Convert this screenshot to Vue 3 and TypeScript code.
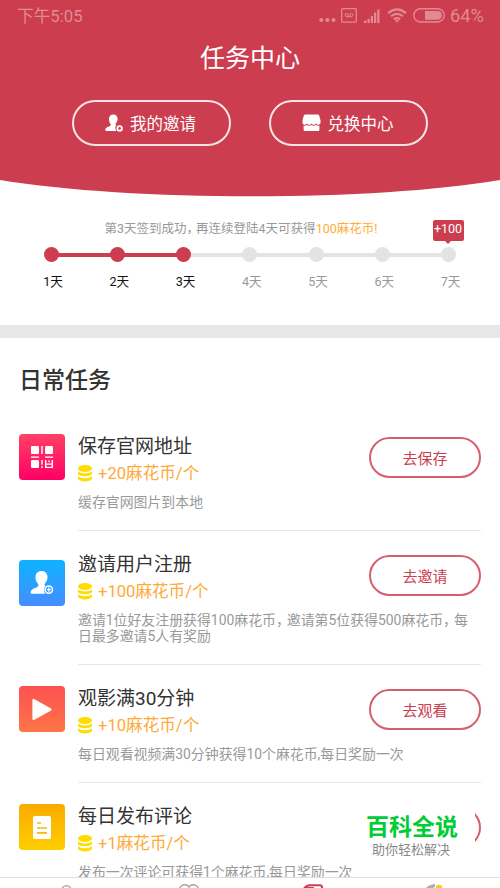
<script setup lang="ts">
type IconName = 'qr' | 'invite' | 'play' | 'note'

interface Task {
  icon: IconName
  title: string
  reward: number
  desc: string[]
  action: string
}

const signedDays = 3
const days: number[] = [1, 2, 3, 4, 5, 6, 7]

// Descriptions are split into clauses, joined by a tightened full-width comma.
const tasks: Task[] = [
  { icon: 'qr', title: '保存官网地址', reward: 20, desc: ['缓存官网图片到本地'], action: '去保存' },
  {
    icon: 'invite',
    title: '邀请用户注册',
    reward: 100,
    desc: ['邀请1位好友注册获得100麻花币', '邀请第5位获得500麻花币', '每日最多邀请5人有奖励'],
    action: '去邀请',
  },
  { icon: 'play', title: '观影满30分钟', reward: 10, desc: ['每日观看视频满30分钟获得10个麻花币,每日奖励一次'], action: '去观看' },
  { icon: 'note', title: '每日发布评论', reward: 1, desc: ['发布一次评论可获得1个麻花币,每日奖励一次'], action: '' },
]
</script>

<template>
  <div class="page">
    <header class="hero">
      <div class="status">
        <span class="time">下午5:05</span>
        <div class="indicators">
          <svg class="dots" width="17" height="6" viewBox="0 0 17 6" fill="currentColor">
            <circle cx="2.3" cy="3" r="2.1" /><circle cx="8.4" cy="3" r="2.1" /><circle cx="14.5" cy="3" r="2.1" />
          </svg>
          <svg class="sim" width="16" height="15" viewBox="0 0 16 15" fill="none" stroke="currentColor">
            <rect x=".7" y=".7" width="14.6" height="13.4" rx="1" stroke-width="1.3" />
            <circle cx="5.6" cy="7" r="1.6" /><circle cx="10.4" cy="7" r="1.6" /><path d="M5.6 8.7h4.8" />
          </svg>
          <svg class="signal" width="16" height="14" viewBox="0 0 16 14" fill="currentColor">
            <path d="M0 14v-2l2.5-1.3V14zM3.6 14v-4.2h2.2V14zM6.8 14V7H9v7zM10 14V3.6h2.2V14zM13.2 14V.5h2.3V14z" />
          </svg>
          <svg class="wifi" width="20" height="15" viewBox="0 0 20 15" fill="none" stroke="currentColor" stroke-width="2.1">
            <path d="M1 5.2Q10-2.5 19 5.2M4 8.3q6-5 12 0M6.9 11.3q3.1-2.4 6.2 0" />
            <path d="M7.7 12.2h4.6L10 14.7z" fill="currentColor" stroke="none" />
          </svg>
          <svg class="battery" width="32" height="15" viewBox="0 0 32 15">
            <rect x=".8" y=".8" width="30.4" height="13.2" rx="6.6" fill="none" stroke="currentColor" stroke-width="1.4" />
            <path d="M12 3h12.5a4.4 4.4 0 0 1 0 8.8H12z" fill="currentColor" />
          </svg>
          <span class="percent">64%</span>
        </div>
      </div>
      <h1>任务中心</h1>
      <div class="hero-actions">
        <button class="pill">
          <svg width="18" height="18" viewBox="0 0 18 18" fill="#fff">
            <path d="M8.3.5c2.7 0 4.3 1.9 4.3 4.5 0 2-.9 3.4-1.8 4.5-.5.7-.3 1.4.6 1.800-1 .9-1.300 2-1 3.300.1 1 .4 1.800 1 2.400H1.600C.7 17 .3 16.600.3 15.800c0-1.700 1.200-2.300 3-3 1.600-.6 3-1.200 2.400-2.500C4.800 9.200 4 7.500 4 5 4 2.400 5.600.5 8.300.5z" />
            <circle cx="14.600" cy="14.400" r="2.300" fill="none" stroke="#fff" stroke-width="1.800" />
          </svg>
          <span>我的邀请</span>
        </button>
        <button class="pill">
          <svg width="19" height="18" viewBox="0 0 19 18" fill="#fff">
            <path d="M3.400.5h12.200c.8 0 1.300.4 1.600 1.100l1.300 4.700v2.400c0 1.200-1 2-2.100 2-1 0-1.700-.6-2.300-1.300-.6.7-1.300 1.300-2.300 1.300s-1.700-.6-2.300-1.300c-.6.7-1.300 1.300-2.300 1.300s-1.700-.6-2.300-1.300c-.6.7-1.300 1.300-2.300 1.300C1.500 10.700.5 9.900.5 8.700V6.300l1.300-4.700C2.100.9 2.600.5 3.400.5z" />
            <path d="M1.600 11.600c1.200.5 2.300.1 3.200-.6 1.300 1 3 1 4.600 0 1.500 1 3.200 1 4.600 0 1.100.8 2.200 1 3.400.6v4.200c0 .8-.5 1.200-1.200 1.200H2.800c-.8 0-1.200-.5-1.200-1.200z" />
          </svg>
          <span>兑换中心</span>
        </button>
      </div>
      <svg class="curve" width="500" height="17" viewBox="0 0 500 17" preserveAspectRatio="none">
        <path d="M0 0C130 21.5 370 22 500 0z" fill="#cc3d4f" />
      </svg>
    </header>

    <section class="checkin">
      <p class="hint">第3天签到成功<span class="comma">，</span>再连续登陆4天可获得<em>100麻花币!</em></p>
      <ol class="track">
        <li v-for="day in days" :key="day" :class="{ done: day <= signedDays, linked: day < signedDays }">
          <i class="dot"></i>
          <span class="day">{{ day }}天</span>
          <b v-if="day === 7" class="bonus">+100</b>
        </li>
      </ol>
    </section>

    <section class="daily">
      <h2>日常任务</h2>
      <article v-for="task in tasks" :key="task.title" class="task">
        <div class="badge" :class="task.icon">
          <svg v-if="task.icon === 'qr'" width="22" height="22" viewBox="0 0 22 22" fill="#fff">
            <rect x="0" y="0" width="8" height="8" rx="1.300" /><rect x="14" y="0" width="8" height="8" rx="1.300" />
            <rect x="0" y="14" width="8" height="8" rx="1.300" />
            <path d="M10.300 0h1.400v8h-1.400zM0 10.400h8v1.300H0zM14 10.400h8v1.300h-8zM10.300 14h1.400v4.700h-1.400zM10.300 20.300h1.400V22h-1.400zM14 14h1.400v8H14zM20.600 14H22v8h-1.400zM17.300 14.500h1.400v1.700h-1.400zM15.400 17.600h5.200v1.200h-5.200zM15.400 20.800h5.200V22h-5.200z" />
          </svg>
          <svg v-else-if="task.icon === 'invite'" width="24" height="24" viewBox="0 0 24 24" fill="#fff">
            <path d="M11.500 0c3.700 0 6 2.600 6 6.200 0 2.700-1.200 4.700-2.500 6.300-.9 1.200-.5 2 .6 2.600-2 1.700-2.300 5.400-.3 7.700H2.200C.8 22.800.4 22 .8 20.500c.5-2 2.500-2.800 4.600-3.600 2.400-.9 3.700-1.800 2.600-4.100C6.600 11 5.500 9 5.500 6.200 5.500 2.600 7.800 0 11.500 0z" />
            <circle cx="18.800" cy="18.600" r="3.700" fill="none" stroke="#fff" stroke-width="1.500" />
            <path d="M18.200 16.600h1.300v1.400h1.400v1.300h-1.400v1.400h-1.300v-1.400h-1.400V18h1.400z" />
          </svg>
          <svg v-else-if="task.icon === 'play'" width="20" height="23" viewBox="0 0 20 23">
            <path d="M1.500 2v19L18.500 11.500z" fill="#fff" stroke="#fff" stroke-width="2.200" stroke-linejoin="round" />
          </svg>
          <svg v-else width="18" height="23" viewBox="0 0 18 23">
            <rect width="18" height="23" rx="1.500" fill="#fff" />
            <path d="M4 7h4M4 12h10M4 16.800h10" stroke="#fbb700" stroke-width="1.700" />
          </svg>
        </div>
        <div class="body">
          <div class="top">
            <div class="info">
              <h3>{{ task.title }}</h3>
              <p class="reward">
                <svg width="14" height="17" viewBox="0 0 14 17" fill="#fd0">
                  <ellipse cx="7" cy="3.500" rx="7" ry="3.400" />
                  <path d="M0 6.200c2.500 3 11.500 3 14 0v2.800c-1.500 3-12.500 3-14 0zM0 11.100c2.500 3 11.500 3 14 0v2.700c-1.500 3.700-12.500 3.700-14 0z" />
                </svg>
                <span>+{{ task.reward }}麻花币/个</span>
              </p>
            </div>
            <button class="go">{{ task.action }}</button>
          </div>
          <p class="desc">
            <template v-for="(clause, i) in task.desc" :key="i"><span v-if="i > 0" class="comma">，</span>{{ clause }}</template>
          </p>
        </div>
      </article>
    </section>

    <aside class="brand">
      <strong>百科全说</strong>
      <span>助你轻松解决</span>
    </aside>

    <nav class="tabs">
      <svg width="24" height="24" viewBox="0 0 24 24" fill="none" stroke="#aaa" stroke-width="1.600">
        <circle cx="12.500" cy="6.500" r="4.700" /><path d="M3 23c0-8 19-8 19 0" />
      </svg>
      <svg width="24" height="24" viewBox="0 0 24 24" fill="none" stroke="#aaa" stroke-width="1.600">
        <path d="M12 3C9-1 2.500.5 2.500 6S12 19 12 19s9.500-7.500 9.500-13S15-1 12 3z" />
      </svg>
      <svg class="current" width="24" height="24" viewBox="0 0 24 24" fill="none" stroke="#cc3d4f" stroke-width="2">
        <path d="M3 4.500Q5 1.500 9 1.300h10q2 0 2 2V21H3z" /><path d="M3 4h10" />
      </svg>
      <svg width="24" height="24" viewBox="0 0 24 24" fill="none" stroke="#aaa" stroke-width="1.800">
        <path d="M13 1.200C6 1.500 2 6 2 12s4 10 10 10 10-4 10-10" /><path d="M6 5l7-3" />
        <circle cx="17" cy="4" r="3.200" fill="#fc1" stroke="none" />
      </svg>
    </nav>
  </div>
</template>

<style>
body {
  margin: 0;
  background: #fff;
}
</style>

<style scoped>
* {
  box-sizing: border-box;
}
.page {
  position: relative;
  width: 500px;
  height: 888px;
  overflow: hidden;
  background: #fff;
  font-family: Roboto, 'Noto Sans CJK SC', sans-serif;
  color: #333;
}
h1, h2, h3, p, ol {
  margin: 0;
  padding: 0;
  font-weight: 400;
}
svg {
  display: block;
  flex: none;
}
button {
  font-family: inherit;
  background: none;
  padding: 0;
}
.comma {
  margin-right: -3px;
}
.hero {
  height: 197px;
  display: flex;
  flex-direction: column;
  background: linear-gradient(#cc3d4f 0 180px, #fff 180px);
}
.status {
  height: 32px;
  display: flex;
  align-items: flex-start;
  justify-content: space-between;
  padding: 0 16px 0 17px;
  color: #e28a94;
}
.time {
  font-size: 16.700px;
  line-height: 34px;
}
.indicators {
  height: 31px;
  display: flex;
  align-items: center;
}
.dots { margin: 8px 5px 0 0; }
.sim { margin-right: 7px; }
.signal { margin-right: 7px; }
.wifi { margin-right: 6px; }
.battery { margin-right: 5px; }
.percent {
  font-size: 18.300px;
  line-height: 32px;
}
h1 {
  margin-top: 11px;
  text-align: center;
  font-size: 25px;
  line-height: 32px;
  color: #fff;
}
.hero-actions {
  display: flex;
  justify-content: center;
  gap: 38px;
  margin-top: 25px;
}
.pill {
  width: 159px;
  height: 46px;
  display: flex;
  align-items: center;
  justify-content: center;
  gap: 7px;
  padding-right: 2px;
  border: 2px solid #f8e4e6;
  border-radius: 23px;
  color: #fff;
  font-size: 16.500px;
  line-height: 24px;
}
.pill span {
  padding-top: 4px;
}
.curve {
  margin-top: auto;
}
.checkin {
  height: 141px;
  padding: 22px 18px 0;
  border-bottom: 13px solid #e7e7e7;
}
.hint {
  padding-right: 18px;
  text-align: center;
  font-size: 12.500px;
  line-height: 20px;
  color: #999;
  white-space: nowrap;
}
.hint em {
  font-style: normal;
  color: #ffac38;
}
.track {
  display: grid;
  grid-template-columns: repeat(7, 66.250px);
  list-style: none;
  margin-top: 8px;
}
.track li {
  position: relative;
  display: flex;
  flex-direction: column;
  align-items: center;
  gap: 9px;
  font-size: 12.600px;
  line-height: 21px;
  color: #999;
}
.track li:not(:last-child)::after {
  content: '';
  position: absolute;
  top: 6px;
  left: 50%;
  width: 100%;
  height: 4px;
  background: #e3e3e3;
}
.track li.linked::after {
  background: #cc3d4f;
}
.track li.done {
  color: #111;
}
.day {
  padding-left: 4px;
}
.dot {
  position: relative;
  z-index: 1;
  width: 15px;
  height: 15px;
  border-radius: 50%;
  background: #e3e3e3;
}
.done .dot {
  background: #cc3d4f;
}
.bonus {
  position: absolute;
  top: -27px;
  left: 17px;
  width: 31px;
  height: 21px;
  border-radius: 2px;
  background: #cc3d4f;
  color: #fff;
  font-size: 12.500px;
  font-weight: 400;
  line-height: 17px;
  text-align: center;
}
.bonus::after {
  content: '';
  position: absolute;
  left: 12.500px;
  top: 21px;
  border: 3px solid transparent;
  border-top-color: #cc3d4f;
  border-bottom: 0;
}
.daily {
  padding: 27px 19px 0;
}
h2 {
  font-size: 23px;
  font-weight: 500;
  line-height: 32px;
  margin-bottom: 16px;
}
.task {
  display: flex;
  gap: 13px;
}
.badge {
  flex: none;
  align-self: center;
  display: flex;
  align-items: center;
  justify-content: center;
  width: 46px;
  height: 46px;
  margin-bottom: 30px;
  border-radius: 4px;
}
.qr { background: linear-gradient(#ff4165, #ff0066); }
.invite { background: linear-gradient(#0db3ff, #478dff); }
.play { background: linear-gradient(#fc5150, #ff7549); }
.note { background: linear-gradient(#fbaa00, #ffce00); }
.body {
  flex: 1;
  padding: 21px 0 20px;
  border-bottom: 1px solid #e7e7e7;
}
.top {
  display: flex;
  justify-content: space-between;
  align-items: flex-start;
}
h3 {
  font-size: 19px;
  line-height: 26px;
  color: #333;
}
.reward {
  display: flex;
  align-items: center;
  gap: 6px;
  font-size: 16.600px;
  line-height: 27px;
  color: #ffa937;
}
.go {
  width: 112px;
  height: 41px;
  margin-top: 3px;
  padding-bottom: 1px;
  border: 2px solid #d65f6e;
  border-radius: 21px;
  color: #cc3d4f;
  font-size: 15px;
}
.desc {
  margin-top: 7px;
  font-size: 13.900px;
  line-height: 16px;
  color: #999;
}
.brand {
  position: absolute;
  left: 360px;
  top: 803px;
  width: 115px;
  height: 62px;
  padding: 11px 0 0 6px;
  display: flex;
  flex-direction: column;
  background: #fff;
}
.brand strong {
  font-size: 23px;
  line-height: 28px;
  font-weight: 700;
  color: #0c3;
}
.brand span {
  padding-left: 6px;
  font-size: 13px;
  line-height: 16px;
  color: #888;
}
.tabs {
  position: absolute;
  left: 0;
  bottom: 0;
  width: 500px;
  height: 11px;
  overflow: hidden;
  display: grid;
  grid-template-columns: repeat(4, 1fr);
  justify-items: center;
  padding: 6px 5px 0;
  border-top: 1px solid #ddd;
  background: #fff;
}
.current {
  margin-left: 4px;
}
</style>
